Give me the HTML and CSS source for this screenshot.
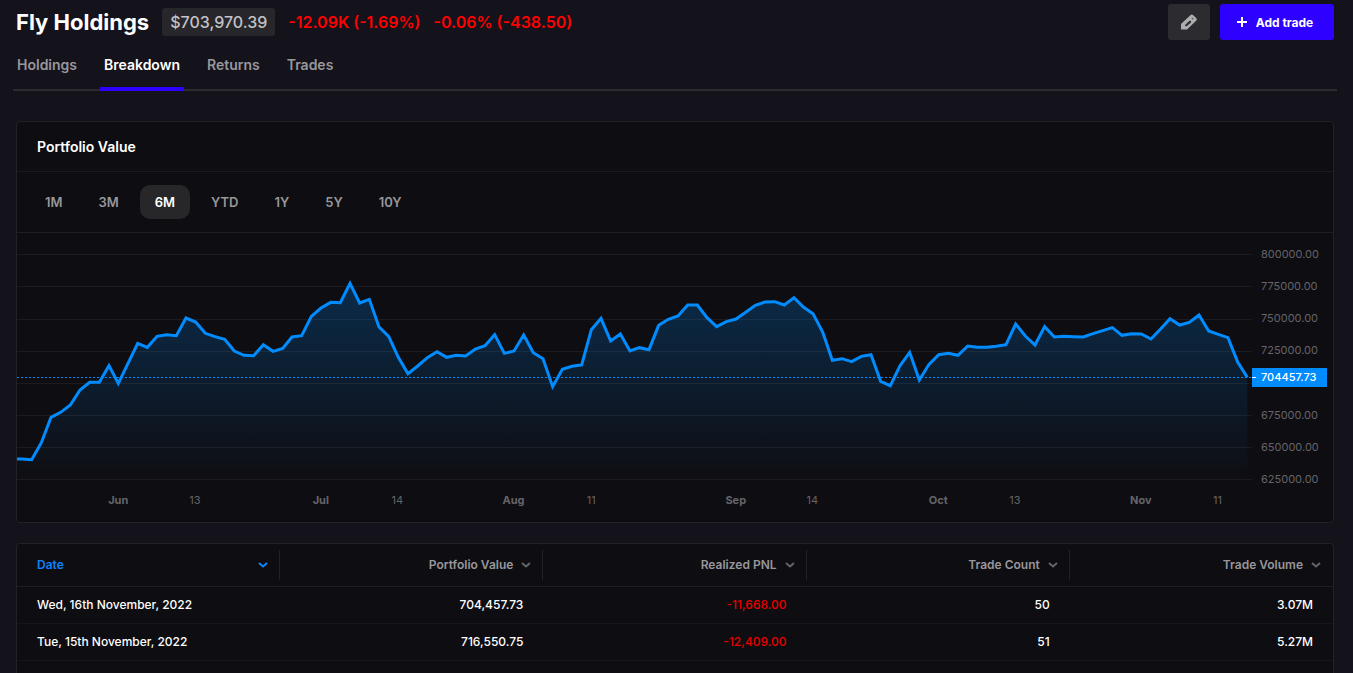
FILE: index.html
```
<!DOCTYPE html>
<html lang="en">
<head>
  <meta charset="UTF-8" />
  <meta name="viewport" content="width=device-width, initial-scale=1" />
  <title>Fly Holdings - Breakdown</title>
  <link rel="stylesheet" href="styles.css">
</head>
<body>
  <header class="page-header">
    <h1>Fly Holdings</h1>
    <span class="balance">$703,970.39</span>
    <span class="change">-12.09K (-1.69%)</span>
    <span class="change">-0.06% (-438.50)</span>
    <div class="actions">
      <button class="btn btn-edit" type="button" aria-label="Edit portfolio">
        <svg width="18" height="18" viewBox="0 0 18 18">
          <path fill-rule="evenodd" d="M1 16.500v-5.500L10.600 2q1.200-1 2.400 0l3.400 3.200q.8 1 0 2.200L7 16.500zM4.800 12.200L6.200 13.600L10.800 9.800L11.200 7.800L9.200 8z" fill="#adacae"/>
          <circle cx="12.600" cy="5.600" r=".9" fill="#56555a"/>
        </svg>
      </button>
      <button class="btn btn-add" type="button">
        <svg width="10" height="10" viewBox="0 0 10 10">
          <path d="M5 0v10M0 5h10" stroke="#fff" stroke-width="2"/>
        </svg>
        Add trade
      </button>
    </div>
  </header>

  <nav class="tabs">
    <a href="#holdings">Holdings</a>
    <a href="#breakdown" class="active">Breakdown</a>
    <a href="#returns">Returns</a>
    <a href="#trades">Trades</a>
  </nav>

  <section class="card">
    <h2>Portfolio Value</h2>
    <div class="ranges">
      <button type="button">1M</button>
      <button type="button">3M</button>
      <button type="button" class="active">6M</button>
      <button type="button">YTD</button>
      <button type="button">1Y</button>
      <button type="button">5Y</button>
      <button type="button">10Y</button>
    </div>
    <div class="chart">
      <svg class="plot" viewBox="0 0 3705 756" preserveAspectRatio="none">
        <defs>
          <linearGradient id="fade" gradientUnits="userSpaceOnUse" x1="0" y1="0" x2="0" y2="756">
            <stop offset="0" stop-color="#008cff" stop-opacity=".3"/>
            <stop offset="1" stop-color="#008cff" stop-opacity="0"/>
          </linearGradient>
        </defs>
        <path id="area" fill="url(#fade)"/>
        <path class="grid" d="M0 64H3705M0 160H3705M0 259H3705M0 355H3705M0 451H3705M0 547H3705M0 643H3705M0 739H3705"/>
        <path id="line"/>
        <path class="last-price" d="M0 433H3705"/>
      </svg>
      <div class="price-axis">
        <span>800000.00</span>
        <span>775000.00</span>
        <span>750000.00</span>
        <span>725000.00</span>
        <span class="current">704457.73</span>
        <span>675000.00</span>
        <span>650000.00</span>
        <span>625000.00</span>
      </div>
      <svg class="time-axis">
        <text x="8.2%" y="19" class="month">Jun</text>
        <text x="14.4%" y="19">13</text>
        <text x="24.6%" y="19" class="month">Jul</text>
        <text x="30.8%" y="19">14</text>
        <text x="40.2%" y="19" class="month">Aug</text>
        <text x="46.5%" y="19">11</text>
        <text x="58.2%" y="19" class="month">Sep</text>
        <text x="64.4%" y="19">14</text>
        <text x="74.6%" y="19" class="month">Oct</text>
        <text x="80.8%" y="19">13</text>
        <text x="91%" y="19" class="month">Nov</text>
        <text x="97.2%" y="19">11</text>
      </svg>
    </div>
  </section>

  <section class="card card-table">
    <table>
      <thead>
        <tr>
          <th class="sorted"><div>Date <svg width="10" height="6" viewBox="0 0 10 6"><path d="M1 1l4 3.500L9 1"/></svg></div></th>
          <th><div>Portfolio Value <svg width="10" height="6" viewBox="0 0 10 6"><path d="M1 1l4 3.500L9 1"/></svg></div></th>
          <th><div>Realized PNL <svg width="10" height="6" viewBox="0 0 10 6"><path d="M1 1l4 3.500L9 1"/></svg></div></th>
          <th><div>Trade Count <svg width="10" height="6" viewBox="0 0 10 6"><path d="M1 1l4 3.500L9 1"/></svg></div></th>
          <th><div>Trade Volume <svg width="10" height="6" viewBox="0 0 10 6"><path d="M1 1l4 3.500L9 1"/></svg></div></th>
        </tr>
      </thead>
      <tbody>
        <tr>
          <td>Wed, 16th November, 2022</td>
          <td>704,457.73</td>
          <td class="negative">-11,668.00</td>
          <td>50</td>
          <td>3.07M</td>
        </tr>
        <tr>
          <td>Tue, 15th November, 2022</td>
          <td>716,550.75</td>
          <td class="negative">-12,409.00</td>
          <td>51</td>
          <td>5.27M</td>
        </tr>
      </tbody>
    </table>
  </section>

  <script src="chart.js"></script>
</body>
</html>
```

FILE: styles.css
```
* {
  box-sizing: border-box;
}
body {
  font-family: Inter, "Liberation Sans", sans-serif;
  background: #14121b;
  color: #fff;
  margin: 0;
  padding: 4px 19px 0 16px;
  min-height: 100vh;
  display: flex;
  flex-direction: column;
}
button {
  font-family: inherit;
  border: 0;
  cursor: pointer;
}
.page-header {
  display: flex;
  align-items: center;
  height: 36px;
}
h1 {
  margin: 0 13px 0 0;
  font-size: 22px;
  line-height: 28px;
  font-weight: 700;
}
.balance {
  margin-right: 13px;
  padding: 0 8px;
  background: #27262b;
  border-radius: 3px;
  color: #c4c3c6;
  font-size: 16px;
  line-height: 28px;
  font-weight: 500;
}
.change {
  margin-right: 13px;
  color: #f00;
  font-size: 16px;
  font-weight: 600;
}
.actions {
  display: flex;
  gap: 10px;
  margin-left: auto;
}
.btn {
  display: flex;
  align-items: center;
  justify-content: center;
  height: 36px;
  border-radius: 3px;
  color: #fff;
}
.btn-edit {
  width: 42px;
  padding: 0;
  background: #2c2b30;
}
.btn-add {
  gap: 9px;
  width: 114px;
  padding: 0 4px 0 0;
  background: #2e00ff;
  font-size: 12px;
  font-weight: 700;
}
.tabs {
  display: flex;
  gap: 19px;
  height: 51px;
  margin: 0 -3px 30px;
  border-bottom: 2px solid #2c2b30;
}
.tabs a {
  height: 51px;
  padding: 0 4px;
  color: #98979b;
  font-size: 14px;
  line-height: 50px;
  font-weight: 600;
  text-decoration: none;
}
.tabs .active {
  color: #fff;
  border-bottom: 4px solid #2e00ff;
  border-radius: 2px 2px 0 0;
}
.card {
  background: #0e0d11;
  border: 1px solid #222125;
  border-radius: 4px;
}
h2 {
  margin: 0;
  padding: 0 20px;
  font-size: 14px;
  line-height: 49px;
  font-weight: 600;
  border-bottom: 1px solid #1b1a1e;
}
.ranges {
  display: flex;
  gap: 6px;
  padding: 13px;
  border-bottom: 1px solid #1f1e22;
}
.ranges button {
  height: 34px;
  padding: 0 15px;
  background: none;
  border-radius: 10px;
  color: #98979b;
  font-size: 13px;
  font-weight: 600;
}
.ranges .active {
  background: #272729;
  color: #fff;
}

/* chart */
.chart {
  display: grid;
  grid-template-columns: 1fr 81px;
  grid-template-rows: 252px 37px;
}
.plot {
  width: 100%;
  height: 252px;
}
.plot path {
  vector-effect: non-scaling-stroke;
}
.grid {
  stroke: #fff;
  stroke-opacity: .06;
  shape-rendering: crispEdges;
}
#line {
  fill: none;
  stroke: #008cff;
  stroke-width: 3px;
}
.last-price {
  stroke: #008cff;
  stroke-dasharray: 2 2;
  shape-rendering: crispEdges;
}
.price-axis {
  display: flex;
  flex-direction: column;
  justify-content: space-between;
  padding: 12px 6px 0 0;
  height: 256px;
  color: #65646a;
  font-size: 11px;
  line-height: 19px;
}
.price-axis span {
  padding-left: 9px;
}
.price-axis .current {
  position: relative;
  top: -6px;
  background: #008cff;
  color: #fff;
  font-weight: 500;
}
.current::before {
  content: "";
  position: absolute;
  left: 0;
  top: 9px;
  width: 4px;
  height: 1px;
  background: #fff;
}
.time-axis {
  width: 100%;
  height: 37px;
}
.time-axis text {
  fill: #65646a;
  font-size: 11px;
  text-anchor: middle;
}
.time-axis .month {
  font-weight: 700;
}

/* table */
.card-table {
  flex: 1;
  margin-top: 20px;
  border-bottom: 0;
  border-radius: 4px 4px 0 0;
}
table {
  width: 100%;
  table-layout: fixed;
  border-collapse: collapse;
  font-size: 12px;
}
th {
  height: 42px;
  padding: 0;
  border-bottom: 1px solid #1f1e22;
  color: #98979b;
  font-weight: 600;
}
th div {
  display: flex;
  align-items: center;
  justify-content: flex-end;
  gap: 8px;
  height: 30px;
  padding: 0 11px 0 20px;
  border-right: 1px solid #222125;
}
th:last-child div {
  padding-right: 12px;
  border-right: 0;
}
th svg {
  fill: none;
  stroke: #65646a;
  stroke-width: 2px;
}
.sorted div {
  justify-content: space-between;
  color: #0a84ff;
}
.sorted svg {
  stroke: #0a84ff;
}
td {
  height: 37px;
  padding: 0 20px;
  border-bottom: 1px solid #16151a;
  font-weight: 500;
  text-align: right;
}
td:first-child {
  text-align: left;
}
.negative {
  color: #e60000;
}
```

FILE: chart.js
```
// one point per trading day, measured down from the top of the plot
const points = [
  678, 680, 629, 553, 538, 516, 471, 448, 448, 398, 451, 391, 331, 343, 310, 305,
  308, 255, 267, 301, 311, 319, 354, 367, 368, 335, 355, 346, 312, 308, 250, 225,
  208, 209, 151, 210, 199, 282, 310, 373, 422, 399, 374, 356, 373, 367, 369, 348,
  338, 305, 361, 354, 306, 359, 377, 461, 409, 400, 396, 290, 256, 324, 303, 354,
  344, 350, 277, 259, 249, 216, 216, 254, 281, 266, 258, 238, 217, 207, 206, 216,
  194, 223, 242, 297, 382, 377, 386, 370, 365, 445, 458, 398, 358, 441, 394, 365,
  361, 367, 339, 343, 343, 340, 335, 273, 309, 336, 281, 312, 310, 311, 312, 302,
  293, 284, 307, 302, 303, 318, 289, 257, 276, 268, 246, 294, 304, 314, 387, 433
];
const start = 15;
const end = 3691;
const step = (end - start) / (points.length - 1);

const path = 'M0 678' + points.map((y, i) => `L${Math.round(start + i * step)} ${y}`).join('');

document.getElementById('line').setAttribute('d', path);
document.getElementById('area').setAttribute('d', `${path}V756H0Z`);
```
